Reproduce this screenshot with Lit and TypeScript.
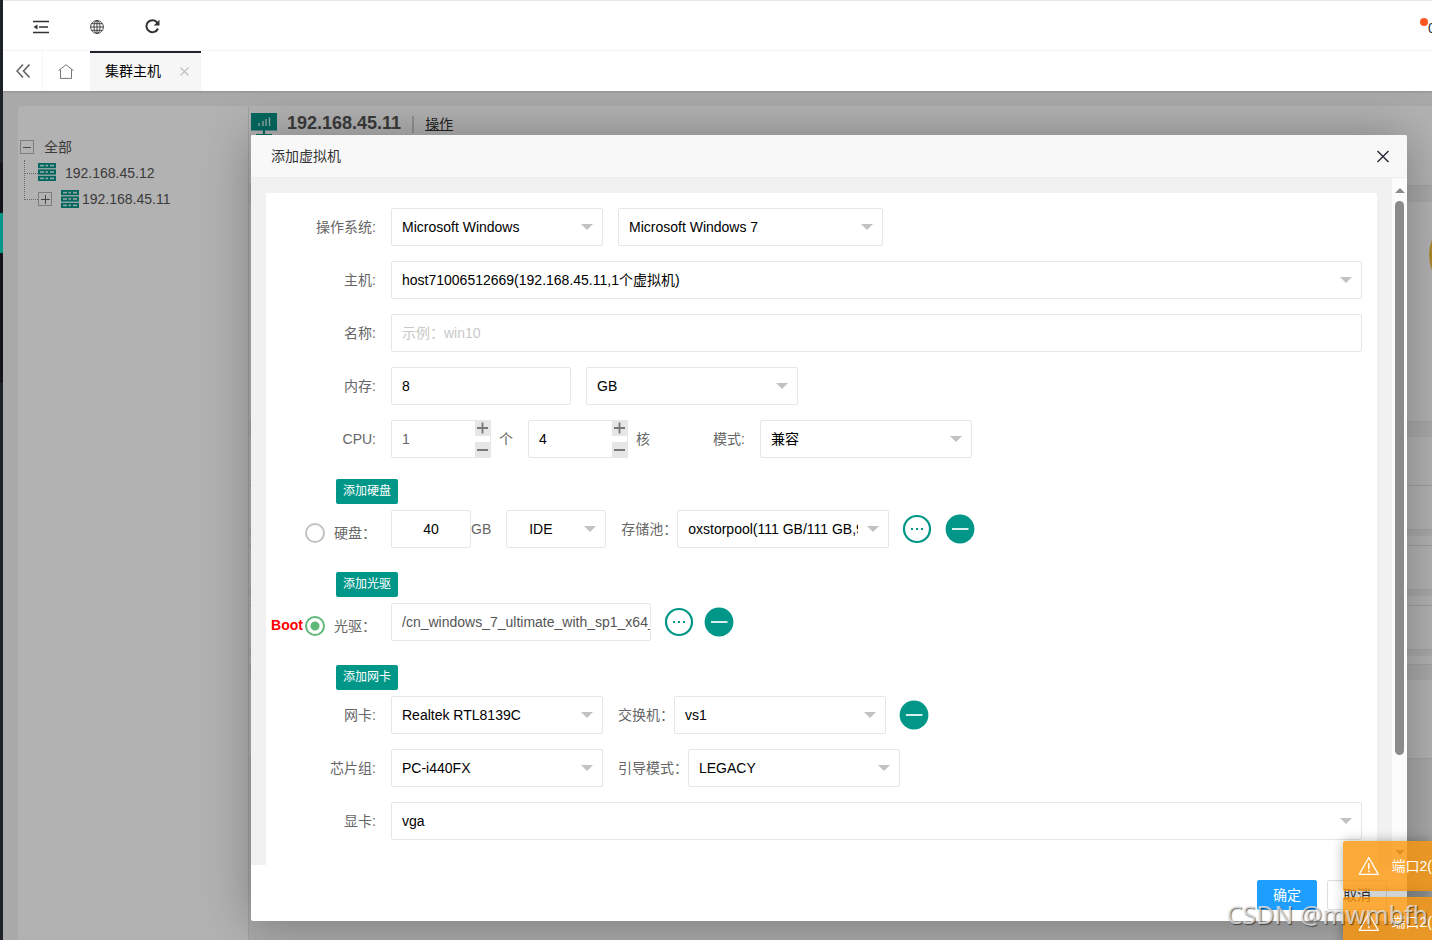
import { LitElement, html, css, svg, nothing } from "lit";
import { customElement } from "lit/decorators.js";
import { classMap } from "lit/directives/class-map.js";

const serverIcon = html`<svg class="server" width="18" height="18" viewBox="0 0 18 18" aria-hidden="true">
  ${[0, 6.4, 12.8].map(
    (y) => svg`
    <rect x="0" y=${y} width="18" height="5.2" fill="#009688"/>
    <rect x="2" y=${y + 1.8} width="4" height="1.6" fill="#d6efec"/>
    <rect x="7.5" y=${y + 1.8} width="2.5" height="1.6" fill="#d6efec"/>
    <rect x="12" y=${y + 1.8} width="4" height="1.6" fill="#d6efec"/>`
  )}
</svg>`;

const moreIcon = html`<svg width="30" height="30" viewBox="0 0 30 30" aria-hidden="true">
  <circle cx="15" cy="15" r="13" fill="#fff" stroke="#009688" stroke-width="2.2"/>
  <g fill="#009688"><rect x="9" y="14" width="2" height="2"/><rect x="14" y="14" width="2" height="2"/><rect x="19" y="14" width="2" height="2"/></g>
</svg>`;

const removeIcon = html`<svg width="30" height="30" viewBox="0 0 30 30" aria-hidden="true">
  <circle cx="15" cy="15" r="14.4" fill="#009688"/>
  <path d="M7 15H23.500" stroke="#fff" stroke-width="1.700"/>
</svg>`;

const warnIcon = html`<svg width="24" height="22" viewBox="0 0 24 22" aria-hidden="true">
  <path d="M12 1.500L22.600 20.300H1.400Z" fill="none" stroke="#fff" stroke-width="1.400" stroke-linejoin="round"/>
  <path d="M12 8V14.500M12 16V18" stroke="#fff" stroke-width="1.800"/>
</svg>`;

@customElement("app-root")
export class AppRoot extends LitElement {
  static styles = css`
    :host {
      display: block;
      height: 100vh;
      overflow: hidden;
      position: relative;
      font: 14px/24px "Liberation Sans", "Noto Sans CJK SC", sans-serif;
      color: #666;
    }
    *, *::before, *::after { box-sizing: border-box; }
    button, input, select { font: inherit; margin: 0; }
    button { border: 0; padding: 0; background: none; cursor: pointer; }
    svg { display: block; }

    .shell { display: flex; height: 100%; }
    .nav { flex: none; width: 3px; background: #20222a; display: flex; flex-direction: column; }
    .nav-space { height: 213px; background: linear-gradient(#20222a 163px, #14151b 163px); }
    .nav-current { height: 40px; background: #009688; }
    .nav-children { height: 130px; background: #14151b; }
    .main { flex: 1; min-width: 0; display: flex; flex-direction: column; }

    .toolbar {
      height: 51px; flex: none; background: #fff; display: flex; align-items: center;
      border-top: 1px solid #e6e6e6; border-bottom: 1px solid #f6f6f6; padding: 2px 0 0 28px; gap: 36px;
    }
    .tool { width: 20px; height: 20px; display: grid; place-items: center; color: #333; }
    .account { margin-left: auto; width: 12px; height: 24px; display: flex; white-space: nowrap; overflow: hidden; color: #333; }
    .dot { flex: none; width: 8px; height: 8px; border-radius: 50%; background: #ff5722; margin-top: 3px; }
    .account-name { margin-top: 1px; }
    .tabs { height: 40px; flex: none; background: #fff; display: flex; position: relative; z-index: 1; box-shadow: 0 1px 2px rgba(0,0,0,.15); }
    .tab-tool { width: 40px; display: grid; place-items: center; border-right: 1px solid #f6f6f6; color: #666; }
    .tab-home { width: 47px; border: 0; padding-right: 2px; }
    .tab {
      background: #f6f6f6; color: #000; display: flex; align-items: center; gap: 19px;
      padding: 0 12px 2px 15px; border-top: 2px solid #20222a;
    }
    .tab-close { color: #c2c2c2; }

    .content { flex: 1; min-height: 0; background: #f2f2f2; padding: 15px 0 0 15px; display: flex; position: relative; }
    .tree { width: 231px; flex: none; background: #fff; border-right: 1px solid #e6e6e6; border-radius: 2px 2px 0 0; padding: 28px 2px; }
    .node { display: flex; align-items: center; height: 26px; color: #555; }
    .toggle { width: 14px; height: 14px; border: 1px solid #b4b4bc; color: #666; display: grid; place-items: center; background: #fff; flex: none; }
    .node-root { gap: 10px; }
    .branch { height: 52px; margin-left: 4px; position: relative; }
    .branch::before { content: ""; position: absolute; left: 0; top: 0; height: 38px; border-left: 1px dotted #999; }
    .twig { width: 14px; border-top: 1px dotted #999; flex: none; }
    .leaf-a .server { margin: 0 9px 2px 0; }
    .leaf-b .server { margin: 0 3px 0 9px; }
    .detail { flex: 1; min-width: 0; display: flex; flex-direction: column; }
    .panel { background: #fff; flex: none; border-bottom: 1px solid #e8e8e8; }
    .detail-head { height: 80px; margin-bottom: 16px; display: flex; align-items: flex-start; padding: 5px 2px; }
    .detail-title { font-size: 18px; line-height: 24px; font-weight: bold; color: #555; margin: 0 11px 0 10px; }
    .bar { width: 2px; height: 17px; background: #d2d2d2; margin: 5px 11px 0 0; }
    .detail-link { color: #333; margin-top: 1px; }
    .gauge-panel { height: 220px; margin-bottom: 15px; overflow: hidden; display: flex; justify-content: flex-end; align-items: flex-start; }
    .gauge { width: 80px; height: 80px; border-radius: 50%; border: 12px solid #f7c343; margin: 13px -77px 0 0; flex: none; }
    .info-panel { height: 93px; margin-bottom: 6px; padding-top: 48px; }
    .sub-panel { height: 54px; margin-bottom: 6px; padding-top: 9px; }
    .rule { height: 1px; background: #e2e2e2; }
    .stub-panel { height: 9px; margin-bottom: 15px; }
    .tail-panel { height: 79px; }

    .shade {
      position: absolute; inset: 0; z-index: 2; background: rgba(0,0,0,.3);
      padding: 44px 25px 19px 248px; display: flex; overflow: hidden;
    }
    .dialog { flex: 1; min-width: 0; background: #fff; border-radius: 2px; box-shadow: 1px 1px 50px rgba(0,0,0,.3); display: flex; flex-direction: column; }
    .dialog-head { height: 43px; flex: none; background: #f8f8f8; border-bottom: 1px solid #eee; padding: 0 17px 0 20px; display: flex; align-items: center; justify-content: space-between; color: #333; border-radius: 2px 2px 0 0; }
    .dialog-title { font: inherit; margin: 0; }
    .dialog-body { flex: 1; min-height: 0; display: flex; overflow: hidden; background: #f1f1f1; }
    .form { flex: 1; min-width: 0; margin: 15px 15px 0; background: #fff; border-radius: 2px 2px 0 0; padding: 15px 15px 0 0; }
    .scrollbar { width: 15px; flex: none; background: #fcfcfc; padding: 10px 3px; display: flex; flex-direction: column; align-items: center; gap: 8px; }
    .thumb { width: 9px; height: 554px; border-radius: 5px; background: #8b8b8b; }
    .arrow-up { border: 5px solid transparent; border-top: 0; border-bottom-color: #8b8b8b; }
    .arrow-down { border: 5px solid transparent; border-bottom: 0; border-top-color: #8b8b8b; margin-top: auto; }

    .row { display: flex; align-items: center; height: 38px; margin-bottom: 15px; }
    .name { width: 110px; margin-right: 15px; text-align: right; flex: none; white-space: nowrap; }
    .add-row { padding-left: 70px; height: 25px; margin: 24px 0 6px; display: flex; }
    .add-first { margin-top: 21px; }
    .add { background: #009688; color: #fff; border-radius: 2px; width: 62px; font-size: 12px; line-height: 25px; }
    .field {
      height: 38px; border: 1px solid #e6e6e6; border-radius: 2px; background: #fff; color: #000;
      padding: 0 10px; width: 100%; min-width: 0; outline: 0; appearance: none;
    }
    .field::placeholder { color: #c8c8c8; opacity: 1; }
    .pick { position: relative; display: block; flex: none; }
    .pick .field { padding-right: 30px; }
    .pick::after { content: ""; position: absolute; right: 10px; top: 16px; border: 6px solid transparent; border-bottom: 0; border-top-color: #c2c2c2; pointer-events: none; }
    .w-md { width: 212px; }
    .w-lg { width: 265px; }
    .w-full { flex: 1; min-width: 0; }
    .w-sm { width: 100px; }
    .w-sm .field { padding-left: 22px; }
    .w-memory { width: 180px; flex: none; }
    .w-disk { width: 80px; flex: none; text-align: center; }
    .w-path { width: 260px; flex: none; color: #555; padding-right: 0; }
    .gap { margin-left: 15px; }
    .count { width: 100px; display: flex; flex: none; border: 1px solid #e6e6e6; border-radius: 2px; height: 38px; }
    .count .field { border: 0; height: 36px; flex: 1; }
    .count .muted { color: #666; }
    .steps { width: 16px; flex: none; display: flex; flex-direction: column; justify-content: space-between; margin: -1px; }
    .step { height: 16px; background: #e6e6e6; display: grid; place-items: center; color: #777; }
    .unit { margin: 0 15px 0 8px; }
    .mode { width: 80px; text-align: right; margin-right: 15px; }
    .boot { width: 110px; margin-right: 15px; display: flex; align-items: center; justify-content: flex-end; padding-top: 7px; flex: none; }
    .boot-tag { color: #f00; font-weight: bold; margin: 0 2px 2px 0; }
    .radio { appearance: none; width: 20px; height: 20px; border: 2px solid #c2c2c2; border-radius: 50%; background: #fff; margin-right: 9px; flex: none; }
    .radio:checked { border-color: #5fb878; background: radial-gradient(circle, #5fb878 4px, #fff 5px); }
    .actions { display: flex; gap: 13px; margin-left: 13px; }
    .actions-tight { gap: 10px; }

    .dialog-foot { height: 56px; flex: none; display: flex; justify-content: flex-end; gap: 10px; padding: 15px 20px; }
    .confirm, .cancel { width: 60px; height: 30px; border-radius: 2px; border: 1px solid #dedede; background: #fff; color: #333; }
    .confirm { background: #1e9fff; border-color: #1e9fff; color: #fff; }

    .toasts { position: absolute; right: 0; bottom: -7px; width: 89px; z-index: 3; display: flex; flex-direction: column; gap: 6px; }
    .toast { height: 50px; background: rgba(250,148,6,.8); color: #fff; display: flex; align-items: center; gap: 12px; padding-left: 15px; white-space: nowrap; overflow: hidden; border-radius: 2px 0 0 2px; box-shadow: 0 0 12px rgba(0,0,0,.3); }
    .mark { position: absolute; right: 4px; bottom: 10px; z-index: 4; font: 25px/32px "Noto Sans", sans-serif; color: rgba(235,235,235,.75); text-shadow: 1px 1px 1px rgba(0,0,0,.55); pointer-events: none; }
  `;

  private select(id: string, options: string[], cls: Record<string, boolean>, label?: string) {
    return html`<span class=${classMap({ pick: true, ...cls })}>
      <select class="field" id=${id} aria-label=${label ?? nothing}>
        ${options.map((o) => html`<option>${o}</option>`)}
      </select>
    </span>`;
  }

  private counter(id: string, value: string, label: string, muted = false) {
    return html`<span class="count">
      <input class=${classMap({ field: true, muted })} id=${id} .value=${value} aria-label=${label} />
      <span class="steps">
        <button class="step" aria-label="增加"><svg width="12" height="12" viewBox="0 0 12 12"><path d="M5.500 0.500V11.500M0 6H11" stroke="currentColor" stroke-width="1.800"/></svg></button>
        <button class="step" aria-label="减少"><svg width="12" height="12" viewBox="0 0 12 12"><path d="M0 6H11" stroke="currentColor" stroke-width="2"/></svg></button>
      </span>
    </span>`;
  }

  render() {
    return html`
      <div class="shell">
        <div class="nav"><div class="nav-space"></div><div class="nav-current"></div><div class="nav-children"></div></div>
        <div class="main">
          <header class="toolbar">
            <button class="tool" aria-label="侧边伸缩"><svg width="16" height="14" viewBox="0 0 16 14"><path d="M0 1.500H16M6 7H15M0 12.500H16" stroke="currentColor" stroke-width="1.600"/><path d="M0.500 7L4.500 4.500V9.500Z" fill="currentColor"/></svg></button>
            <button class="tool" aria-label="网站"><svg width="14" height="14" viewBox="0 0 14 14" fill="none" stroke="currentColor" stroke-width="0.900"><circle cx="7" cy="7" r="6.400"/><ellipse cx="7" cy="7" rx="3" ry="6.400"/><path d="M7 0.600V13.400M0.600 7H13.400M1.600 3.700H12.400M1.600 10.300H12.400"/></svg></button>
            <button class="tool" aria-label="刷新"><svg width="16" height="15" viewBox="0 0 16 15"><path d="M12.300 3.600A6 6 0 1 0 13 9.500" fill="none" stroke="currentColor" stroke-width="2"/><path d="M14.500 0.700V6.500H8.700Z" fill="currentColor"/></svg></button>
            <span class="account"><span class="dot"></span><span class="account-name">0</span></span>
          </header>
          <nav class="tabs">
            <button class="tab-tool" aria-label="向左"><svg width="14" height="14" viewBox="0 0 14 14" fill="none" stroke="currentColor" stroke-width="1.600"><path d="M7 0.500L1 7L7 13.500M13.500 0.500L7.500 7L13.500 13.500"/></svg></button>
            <button class="tab-tool tab-home" aria-label="首页"><svg width="16" height="15" viewBox="0 0 16 15" fill="none" stroke="currentColor" stroke-width="0.900"><path d="M0.500 6.700L8 0.700L15.500 6.700M2.500 5.500V14.400H13.500V5.500"/></svg></button>
            <div class="tab"><span>集群主机</span><button class="tab-close" aria-label="关闭标签"><svg width="9" height="9" viewBox="0 0 9 9"><path d="M0.500 0.500L8.500 8.500M8.500 0.500L0.500 8.500" stroke="currentColor" stroke-width="1.300"/></svg></button></div>
          </nav>
          <div class="content">
            <aside class="tree">
              <div class="node node-root"><span class="toggle"><svg width="8" height="8" viewBox="0 0 8 8"><path d="M0 4.500H8" stroke="currentColor"/></svg></span>全部</div>
              <div class="branch">
                <div class="node leaf-a"><span class="twig"></span>${serverIcon}<span>192.168.45.12</span></div>
                <div class="node leaf-b"><span class="twig"></span><span class="toggle"><svg width="9" height="9" viewBox="0 0 9 9"><path d="M0 4.500H9M4.500 0V9" stroke="currentColor"/></svg></span>${serverIcon}<span>192.168.45.11</span></div>
              </div>
            </aside>
            <section class="detail">
              <div class="panel detail-head">
                <svg width="26" height="26" viewBox="0 0 26 26" aria-hidden="true"><path d="M0 2H26V19.500H14V23H21V25H5V23H12V19.500H0Z" fill="#009688"/><path d="M8 15V12M12 15V10M15 15V8M18.500 15V6.500" stroke="#d6efec" stroke-width="1.400"/></svg>
                <h1 class="detail-title">192.168.45.11</h1><span class="bar"></span><a class="detail-link" href="#">操作</a>
              </div>
              <div class="panel gauge-panel"><div class="gauge"></div></div>
              <div class="panel info-panel"><div class="rule"></div></div>
              <div class="panel sub-panel"><div class="rule"></div></div>
              <div class="panel sub-panel"><div class="rule"></div></div>
              <div class="panel stub-panel"></div>
              <div class="panel tail-panel"></div>
            </section>
            <div class="shade">
              <div class="dialog" role="dialog" aria-labelledby="dialog-title">
                <div class="dialog-head">
                  <h2 class="dialog-title" id="dialog-title">添加虚拟机</h2>
                  <button aria-label="关闭"><svg width="14" height="14" viewBox="0 0 14 14"><path d="M1.500 2L12.500 13M12.500 2L1.500 13" stroke="#2e2d3c" stroke-width="1.500"/></svg></button>
                </div>
                <div class="dialog-body">
                  <form class="form" @submit=${(e: Event) => e.preventDefault()}>
                    <div class="row"><label class="name" for="os">操作系统:</label>
                      ${this.select("os", ["Microsoft Windows"], { "w-md": true })}
                      ${this.select("version", ["Microsoft Windows 7"], { "w-lg": true, gap: true }, "系统版本")}
                    </div>
                    <div class="row"><label class="name" for="host">主机:</label>${this.select("host", ["host71006512669(192.168.45.11,1个虚拟机)"], { "w-full": true })}</div>
                    <div class="row"><label class="name" for="vm-name">名称:</label><input class="field w-full" id="vm-name" placeholder="示例：win10" /></div>
                    <div class="row"><label class="name" for="memory">内存:</label><input class="field w-memory" id="memory" value="8" />
                      ${this.select("memory-unit", ["GB"], { "w-md": true, gap: true }, "内存单位")}
                    </div>
                    <div class="row"><label class="name" for="cpu">CPU:</label>
                      ${this.counter("cpu", "1", "CPU 个数", true)}<span class="unit">个</span>
                      ${this.counter("cores", "4", "CPU 核数")}<span class="unit">核</span>
                      <label class="mode" for="mode">模式:</label>${this.select("mode", ["兼容"], { "w-md": true })}
                    </div>
                    <div class="add-row add-first"><button class="add">添加硬盘</button></div>
                    <div class="row">
                      <span class="boot"><input class="radio" type="radio" name="boot" id="boot-disk" /><label for="boot-disk">硬盘：</label></span>
                      <input class="field w-disk" value="40" aria-label="硬盘容量" />GB
                      ${this.select("bus", ["IDE"], { "w-sm": true, gap: true }, "总线")}
                      <label class="gap" for="pool">存储池：</label>${this.select("pool", ["oxstorpool(111 GB/111 GB,99%)"], { "w-md": true })}
                      <span class="actions"><button aria-label="更多">${moreIcon}</button><button aria-label="删除硬盘">${removeIcon}</button></span>
                    </div>
                    <div class="add-row"><button class="add">添加光驱</button></div>
                    <div class="row">
                      <span class="boot"><span class="boot-tag">Boot</span><input class="radio" type="radio" name="boot" id="boot-cd" checked /><label for="boot-cd">光驱：</label></span>
                      <input class="field w-path" value="/cn_windows_7_ultimate_with_sp1_x64_dvd" aria-label="镜像路径" />
                      <span class="actions actions-tight"><button aria-label="选择镜像">${moreIcon}</button><button aria-label="删除光驱">${removeIcon}</button></span>
                    </div>
                    <div class="add-row"><button class="add">添加网卡</button></div>
                    <div class="row"><label class="name" for="nic">网卡:</label>
                      ${this.select("nic", ["Realtek RTL8139C"], { "w-md": true })}
                      <label class="gap" for="switch">交换机：</label>${this.select("switch", ["vs1"], { "w-md": true })}
                      <span class="actions"><button aria-label="删除网卡">${removeIcon}</button></span>
                    </div>
                    <div class="row"><label class="name" for="chip">芯片组:</label>
                      ${this.select("chip", ["PC-i440FX"], { "w-md": true })}
                      <label class="gap" for="firmware">引导模式：</label>${this.select("firmware", ["LEGACY"], { "w-md": true })}
                    </div>
                    <div class="row"><label class="name" for="gpu">显卡:</label>${this.select("gpu", ["vga"], { "w-full": true })}</div>
                  </form>
                  <div class="scrollbar" aria-hidden="true"><span class="arrow-up"></span><span class="thumb"></span><span class="arrow-down"></span></div>
                </div>
                <div class="dialog-foot"><button class="confirm">确定</button><button class="cancel">取消</button></div>
              </div>
            </div>
          </div>
        </div>
      </div>
      <div class="toasts">
        <div class="toast">${warnIcon}<span>端口2(</span></div>
        <div class="toast">${warnIcon}<span>端口2(</span></div>
      </div>
      <div class="mark">CSDN @mwmbfh</div>
    `;
  }
}
